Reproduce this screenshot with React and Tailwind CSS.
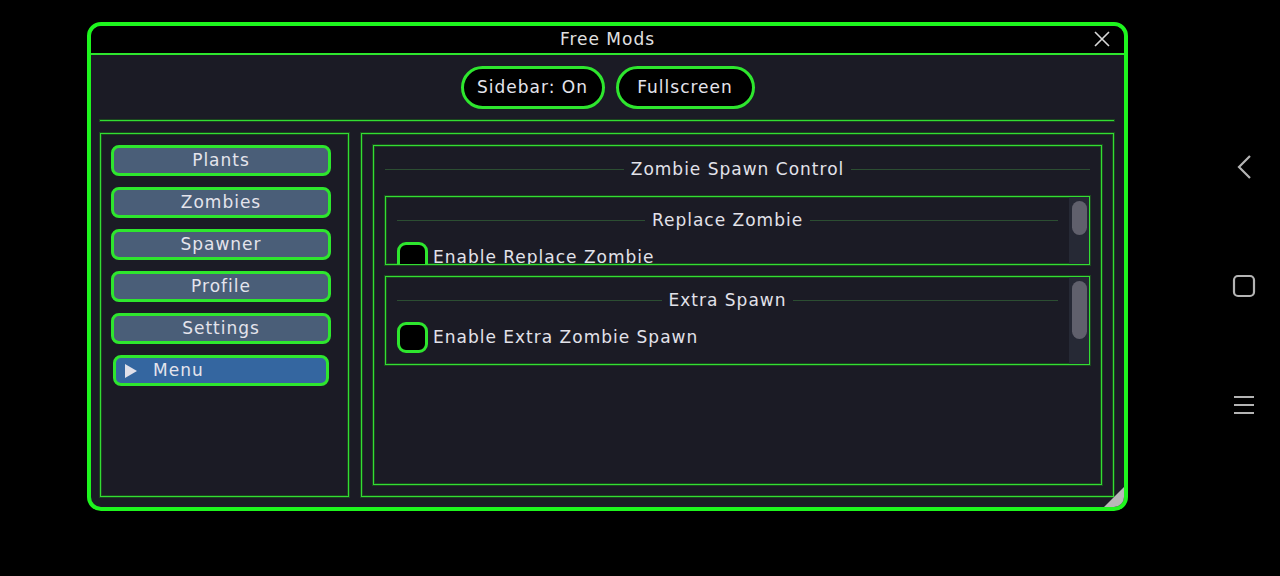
import React from "react";

const font = { fontFamily: '"DejaVu Sans", "Liberation Sans", sans-serif' };

const glow = "shadow-[0_0_0_1px_rgba(28,110,28,0.55),inset_0_0_0_1px_rgba(28,110,28,0.55)]";

function SideBtn({ label, active }) {
  if (active) {
    return (
      <div className="h-[31px] mx-[2px] rounded-[8px] border-[3px] border-[#2ee62e] bg-[#3466a0] flex items-center pl-[8px] text-[#e4e4ec] text-[17px] tracking-[1px]">
        <svg width="14" height="14" viewBox="0 0 14 14" className="mr-[15px]">
          <polygon points="1,0 13,7 1,14" fill="#e0e0ea" />
        </svg>
        <span>{label}</span>
      </div>
    );
  }
  return (
    <div className="h-[31px] rounded-[8px] border-[3px] border-[#2ee62e] bg-[#4a5e78] flex items-center justify-center text-[#e4e4ec] text-[17px] tracking-[1px]">
      {label}
    </div>
  );
}

function Header({ label, className }) {
  return (
    <div className={"flex items-center gap-[7px] " + (className || "")}>
      <div className="flex-1 h-px bg-[#2c4e32]" />
      <span className="text-[#e2e2ea] text-[17px] tracking-[1px] leading-none">{label}</span>
      <div className="flex-1 h-px bg-[#2c4e32]" />
    </div>
  );
}

function Scroll({ thumbH }) {
  return (
    <div className="w-[20px] self-stretch bg-[#262935] flex justify-center pt-[4px]">
      <div className="w-[15px] rounded-full bg-[#60606c]" style={{ height: thumbH }} />
    </div>
  );
}

function Check() {
  return <div className="w-[31px] h-[31px] shrink-0 rounded-[9px] border-[3px] border-[#2ee62e] bg-black" />;
}

export default function App() {
  return (
    <div className="w-[1280px] h-[576px] bg-black flex relative overflow-hidden" style={font}>
      <div className="ml-[87px] mt-[22px] w-[1041px] h-[489px] border-[4px] border-[#1ef51e] rounded-[14px] overflow-hidden flex flex-col bg-[#1b1b25] relative">
        {/* title bar */}
        <div className="h-[29px] shrink-0 bg-black border-b-2 border-[#2ee62e] flex items-center justify-center relative">
          <span className="text-[#e0e0e0] text-[17px] tracking-[1px] leading-none">Free Mods</span>
          <svg className="absolute right-[14px] top-[5px]" width="16" height="16" viewBox="0 0 16 16">
            <path d="M1 1 L15 15 M15 1 L1 15" stroke="#d8d8d8" strokeWidth="1.6" />
          </svg>
        </div>
        {/* body */}
        <div className="flex-1 flex flex-col pl-[9px] pr-[10px] pb-[10px]">
          <div className="flex justify-center gap-[11px] mt-[11px] ml-[1px]">
            <div className="h-[43px] w-[144px] rounded-full border-[3px] border-[#2ee62e] bg-black flex items-center justify-center text-[#e4e4ec] text-[17px] tracking-[1px]">
              Sidebar: On
            </div>
            <div className="h-[43px] w-[139px] rounded-full border-[3px] border-[#2ee62e] bg-black flex items-center justify-center text-[#e4e4ec] text-[17px] tracking-[1px]">
              Fullscreen
            </div>
          </div>
          <div className="h-px bg-[#33dd33] mt-[11px] shadow-[0_0_0_1px_rgba(28,110,28,0.55)]" />
          <div className="h-[364px] flex gap-[12px] mt-[12px]">
            {/* sidebar */}
            <div className={"w-[249px] border border-solid border-[#33dd33] pt-[11px] pl-[10px] pr-[17px] flex flex-col gap-[11px] " + glow}>
              <SideBtn label="Plants" />
              <SideBtn label="Zombies" />
              <SideBtn label="Spawner" />
              <SideBtn label="Profile" />
              <SideBtn label="Settings" />
              <SideBtn label="Menu" active />
            </div>
            {/* content */}
            <div className={"w-[753px] border border-solid border-[#33dd33] p-[11px] flex " + glow}>
              <div className={"w-[729px] border border-solid border-[#33dd33] px-[11px] flex flex-col " + glow}>
                <Header label="Zombie Spawn Control" className="mt-[15px] mb-[18px]" />
                <div className={"h-[69px] border border-solid border-[#33dd33] flex overflow-hidden " + glow}>
                  <div className="flex-1 pl-[11px] pr-[11px] flex flex-col">
                    <Header label="Replace Zombie" className="mt-[15px]" />
                    <div className="flex items-center gap-[5px] mt-[13px]">
                      <Check />
                      <span className="text-[#e2e2ea] text-[17px] tracking-[1px] leading-none">Enable Replace Zombie</span>
                    </div>
                  </div>
                  <Scroll thumbH={34} />
                </div>
                <div className={"h-[89px] mt-[11px] border border-solid border-[#33dd33] flex overflow-hidden " + glow}>
                  <div className="flex-1 pl-[11px] pr-[11px] flex flex-col">
                    <Header label="Extra Spawn" className="mt-[15px]" />
                    <div className="flex items-center gap-[5px] mt-[13px]">
                      <Check />
                      <span className="text-[#e2e2ea] text-[17px] tracking-[1px] leading-none">Enable Extra Zombie Spawn</span>
                    </div>
                  </div>
                  <Scroll thumbH={58} />
                </div>
              </div>
            </div>
          </div>
        </div>
        {/* resize grip */}
        <svg className="absolute right-0 bottom-0" width="20" height="20" viewBox="0 0 20 20">
          <path d="M20 0 L20 20 L0 20 Z" fill="#b8b8b8" />
        </svg>
      </div>
      {/* android nav */}
      <div className="absolute right-[24px] top-[154px] w-[24px] flex flex-col items-center">
        <svg width="16" height="26" viewBox="0 0 16 26">
          <path d="M14 2 L3 13 L14 24" stroke="#b4b4b4" strokeWidth="2.2" fill="none" />
        </svg>
        <svg className="mt-[94px]" width="24" height="24" viewBox="0 0 24 24">
          <rect x="2" y="2" width="20" height="20" rx="4" stroke="#b4b4b4" strokeWidth="2.2" fill="none" />
        </svg>
        <svg className="mt-[96px]" width="22" height="22" viewBox="0 0 22 22">
          <path d="M1 3 H21 M1 11 H21 M1 19 H21" stroke="#b4b4b4" strokeWidth="2.2" />
        </svg>
      </div>
    </div>
  );
}
